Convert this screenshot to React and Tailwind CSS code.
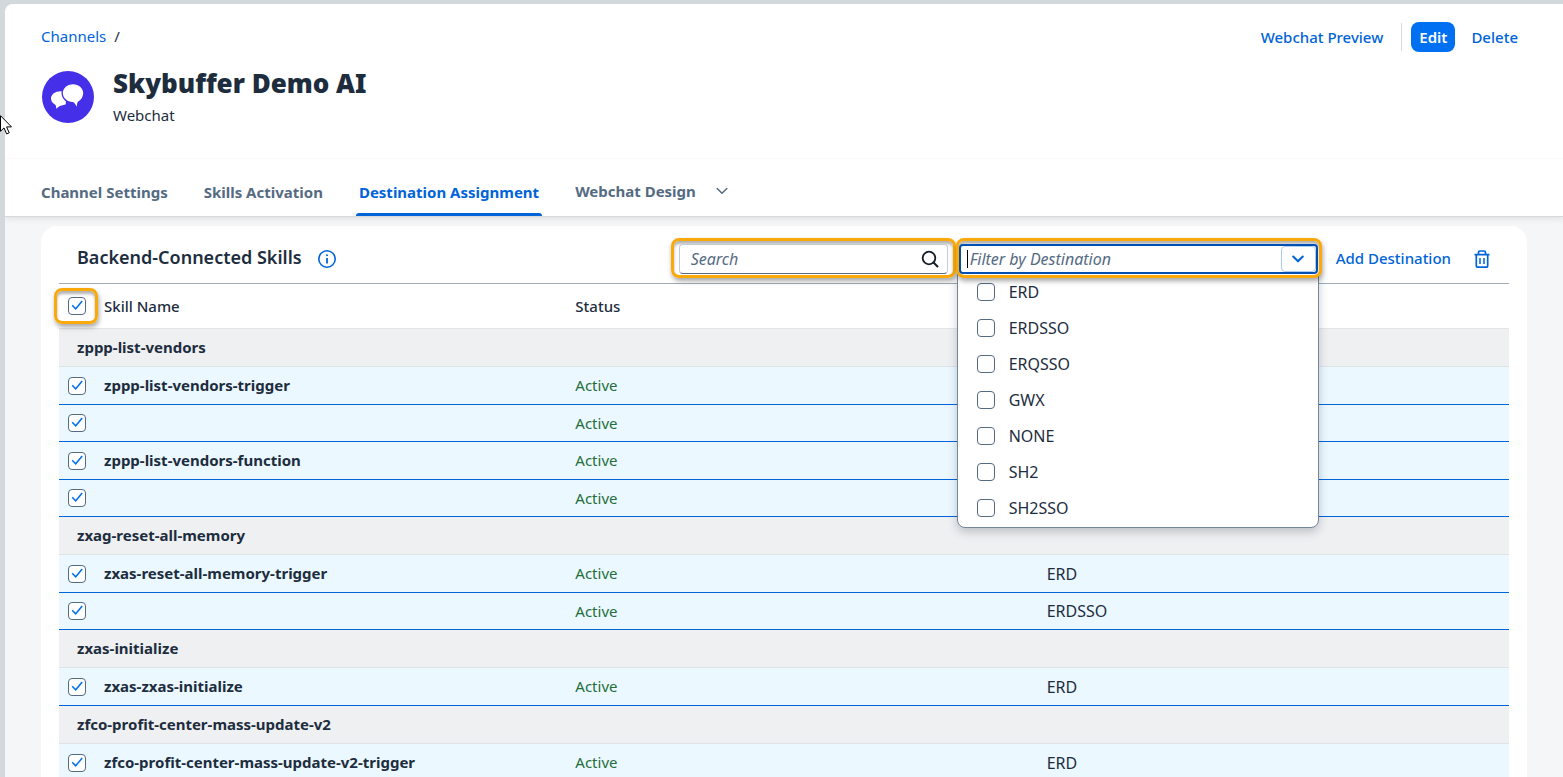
import { useState } from "react";

const rows = [
  { group: "zppp-list-vendors" },
  { name: "zppp-list-vendors-trigger", status: "Active", destination: "" },
  { name: "", status: "Active", destination: "" },
  { name: "zppp-list-vendors-function", status: "Active", destination: "" },
  { name: "", status: "Active", destination: "" },
  { group: "zxag-reset-all-memory" },
  { name: "zxas-reset-all-memory-trigger", status: "Active", destination: "ERD" },
  { name: "", status: "Active", destination: "ERDSSO" },
  { group: "zxas-initialize" },
  { name: "zxas-zxas-initialize", status: "Active", destination: "ERD" },
  { group: "zfco-profit-center-mass-update-v2" },
  { name: "zfco-profit-center-mass-update-v2-trigger", status: "Active", destination: "ERD" },
];

const destinations = ["ERD", "ERDSSO", "ERQSSO", "GWX", "NONE", "SH2", "SH2SSO"];

function Checkbox({ label, defaultChecked }) {
  return (
    <span className="grid h-[18px] w-[18px] shrink-0 place-items-center">
      <input
        type="checkbox"
        aria-label={label}
        defaultChecked={defaultChecked}
        className="peer col-start-1 row-start-1 h-[18px] w-[18px] appearance-none rounded border border-[#556b82] bg-white"
      />
      <svg
        className="pointer-events-none invisible col-start-1 row-start-1 h-[18px] w-[18px] peer-checked:visible"
        viewBox="0 0 18 18"
        fill="none"
        stroke="#0070f2"
        strokeWidth="1.5"
      >
        <path d="M4.2 8.2l3.500 3.600 6.500-7.900" />
      </svg>
    </span>
  );
}

function ChevronDown({ className }) {
  return (
    <svg
      className={className}
      viewBox="0 0 12 8"
      fill="none"
      stroke="currentColor"
      strokeLinecap="round"
      strokeLinejoin="round"
    >
      <path d="M1.2 1.5L6 6.3l4.8-4.8" />
    </svg>
  );
}

function ChatAvatar() {
  return (
    <svg className="h-[52px] w-[52px]" viewBox="0 0 52 52">
      <circle cx="26" cy="26" r="26" fill="#462fe9" />
      {/* Back bubble */}
      <path
        d="M18.500 20.200c-5.300 0-9.500 3.200-9.500 7.200 0 2.500 1.500 4.700 3.900 6 1 .6 1.300 1.800 1.300 4.300 1.800-1.300 3-3.100 5.300-3.300 1.600-.1 3.100-.500 4.300-1.200V20.700c-1.600-.4-3.300-.5-5.300-.5z"
        fill="#fff"
      />
      {/* Front bubble, the outline keeps it apart from the back one */}
      <path
        d="M31 13.200c-5.700 0-10.200 4-10.200 8.900s4.500 9 10 9c1.400 0 2.600 2.300 4 4.700.2-3 .4-4.400 1.400-5.200 3-1.700 5-4.900 5-8.500 0-4.900-4.500-8.900-10.200-8.900z"
        fill="#fff"
        stroke="#462fe9"
        strokeWidth="2.600"
        style={{ paintOrder: "stroke" }}
      />
    </svg>
  );
}

function Header() {
  return (
    <header className="relative z-10 border-b border-[#d9d9d9] bg-white shadow-[0_2px_6px_rgba(34,53,72,0.1)]">
      <div className="flex items-start justify-between border-b border-[#fafafa] pr-[37px] pl-9">
        <div className="h-[154px] pt-5">
          <nav aria-label="Breadcrumb" className="flex gap-2 text-[15px] leading-6">
            <a href="#channels" className="text-[#0064d9]">
              Channels
            </a>
            <span>/</span>
          </nav>
          <div className="mt-4 ml-px flex items-start gap-[19px]">
            <div className="mt-[7px]">
              <ChatAvatar />
            </div>
            <div>
              <h1 className="text-[26px] leading-[38px] font-black">Skybuffer Demo AI</h1>
              <p className="mt-px text-[15px] leading-6">Webchat</p>
            </div>
          </div>
        </div>

        <div className="flex items-center pt-[18px] text-[15px] font-medium text-[#0064d9]">
          <button type="button" className="px-2 leading-7">
            Webchat Preview
          </button>
          <span className="mr-[9px] ml-[10px] h-7 w-px bg-[#d9d9d9]" />
          <button type="button" className="h-[30px] rounded-lg bg-[#0070f2] px-2 font-semibold text-white">
            Edit
          </button>
          <button type="button" className="ml-2 px-2 leading-7">
            Delete
          </button>
        </div>
      </div>

      <div role="tablist" className="flex h-[57px] items-end gap-[30px] pl-[33px] text-[15px] font-bold text-[#556b82]">
        <button type="button" role="tab" className="h-[46px] px-[3px] pb-[2px]">
          Channel Settings
        </button>
        <button type="button" role="tab" className="h-[46px] px-[3px] pb-[2px]">
          Skills Activation
        </button>
        <button
          type="button"
          role="tab"
          aria-selected="true"
          className="relative h-[46px] px-[3px] pb-[2px] text-[#0064d9] after:absolute after:inset-x-0 after:bottom-0 after:h-[3px] after:rounded-t after:bg-[#0064d9]"
        >
          Destination Assignment
        </button>
        <button type="button" role="tab" className="flex h-[46px] items-center gap-5 px-[3px] pb-1">
          Webchat Design
          <ChevronDown className="h-2 w-3 stroke-[1.5]" />
        </button>
      </div>
    </header>
  );
}

function DestinationFilter() {
  const [open, setOpen] = useState(true);

  return (
    <div className="relative w-[366px] shrink-0">
      <div className="relative z-20 rounded-lg border-[3px] border-[#faa90a] bg-white pt-[3px] pb-px pr-px shadow-[1px_3px_5px_rgba(0,0,0,0.35),inset_0_3px_3px_rgba(0,0,0,0.3)]">
        <div className="flex h-[30px] rounded border-2 border-[#0050b4] bg-white">
          <span className="my-1 ml-[6px] w-px bg-black" />
          <input
            type="text"
            aria-label="Filter by Destination"
            placeholder="Filter by Destination"
            className="min-w-0 flex-1 pl-[2px] text-base outline-none placeholder:text-[#556b82] placeholder:italic"
          />
          <button
            type="button"
            aria-label="Show destinations"
            aria-expanded={open}
            onClick={() => setOpen(!open)}
            className="flex w-[35px] items-center justify-center rounded border border-[#a9cdf5] text-[#0064d9]"
          >
            <ChevronDown className="h-2 w-3 stroke-2" />
          </button>
        </div>
      </div>

      {open && (
        <ul className="absolute top-[35px] right-[3px] left-px z-10 rounded-b-lg border border-[#75869a] bg-white pb-px shadow-[0_4px_10px_rgba(34,53,72,0.25)]">
          {destinations.map((item) => (
            <li key={item}>
              <label className="flex h-9 items-center gap-[14px] pl-[19px] text-base">
                <Checkbox />
                {item}
              </label>
            </li>
          ))}
        </ul>
      )}
    </div>
  );
}

function Toolbar() {
  return (
    <div className="flex h-[58px] items-start border-b border-[#a0acb9] pt-3 pr-[19px] pl-[18px]">
      <div className="flex h-[38px] items-center gap-4">
        <h2 className="text-[18px] font-semibold">Backend-Connected Skills</h2>
        <button type="button" aria-label="Information" className="mt-1 text-[#0064d9]">
          <svg className="h-[18px] w-[18px]" viewBox="0 0 18 18" fill="none" stroke="currentColor">
            <circle cx="9" cy="9" r="8.200" strokeWidth="1.600" />
            <path d="M9 8v5.500" strokeWidth="1.800" />
            <circle cx="9" cy="5.300" r="1" fill="currentColor" stroke="none" />
          </svg>
        </button>
      </div>

      <div className="ml-auto flex items-start">
        <div className="w-[285px] rounded-lg border-[3px] border-[#faa90a] px-[5px] pt-[3px] pb-px shadow-[1px_3px_5px_rgba(0,0,0,0.35),inset_0_3px_3px_rgba(0,0,0,0.3)]">
          <div className="flex h-[30px] items-center rounded border border-b-[#556b82] border-[#c5ccd3] bg-white pr-2 pl-[11px]">
            <input
              type="search"
              aria-label="Search"
              placeholder="Search"
              className="min-w-0 flex-1 text-base outline-none placeholder:text-[#556b82] placeholder:italic"
            />
            <button type="button" aria-label="Run search" className="text-[#131e29]">
              <svg className="h-[18px] w-[18px]" viewBox="0 0 18 18" fill="none" stroke="currentColor">
                <circle cx="8" cy="8" r="6.300" strokeWidth="1.800" />
                <path d="M12.500 12.500l4 4" strokeWidth="2" strokeLinecap="round" />
              </svg>
            </button>
          </div>
        </div>
        <DestinationFilter />
        <button type="button" className="ml-[14px] h-10 text-[15px] font-medium text-[#0064d9]">
          Add Destination
        </button>
        <button
          type="button"
          aria-label="Delete destination"
          className="ml-[23px] flex h-[42px] items-center text-[#0064d9]"
        >
          <svg className="h-[18px] w-4" viewBox="0 0 16 18" fill="none" stroke="currentColor" strokeWidth="1.700">
            <path d="M.5 4.700h15M4.500 4.500V2.600C4.500 1.600 5 1 6 1h4c1 0 1.500.6 1.500 1.600v1.900" />
            <path d="M2.300 5v10.400c0 1.100.6 1.700 1.700 1.700h8c1.100 0 1.700-.6 1.700-1.700V5" />
            <path d="M6 8v6M10 8v6" strokeWidth="1.500" />
          </svg>
        </button>
      </div>
    </div>
  );
}

function SkillsTable() {
  return (
    <table className="w-full table-fixed border-separate border-spacing-0 text-left text-[15px]">
      <colgroup>
        <col className="w-9" />
        <col />
        <col />
        <col />
      </colgroup>
      <thead>
        <tr>
          <th className="h-[45px] border-b border-[#e5e5e5]">
            <div className="relative flex justify-center before:absolute before:-inset-y-[9px] before:-right-[3px] before:-left-[5px] before:rounded-lg before:border-[3px] before:border-[#faa90a] before:shadow-[1px_3px_5px_rgba(0,0,0,0.35),inset_0_3px_3px_rgba(0,0,0,0.3)]">
              <Checkbox label="Select all skills" defaultChecked />
            </div>
          </th>
          <th className="border-b border-[#e5e5e5] pl-[9px] font-medium">Skill Name</th>
          <th className="border-b border-[#e5e5e5] pl-[9px] font-medium">Status</th>
          <th className="border-b border-[#e5e5e5]" />
        </tr>
      </thead>
      <tbody>
        {rows.map((row, i) =>
          row.group ? (
            <tr key={i} className="bg-[#eff0f2]">
              <th colSpan={4} scope="rowgroup" className="h-[38px] border-b border-[#e0e3e6] pl-[18px] font-bold">
                {row.group}
              </th>
            </tr>
          ) : (
            <tr key={i} className={`bg-[#ebf8ff] ${row.name ? "h-[38px]" : "h-[37px]"}`}>
              <td className="border-b border-[#0064d9] pl-[9px]">
                <Checkbox label={row.name || "Skill"} defaultChecked />
              </td>
              <td className="border-b border-[#0064d9] pl-[9px] font-bold">{row.name}</td>
              <td className="border-b border-[#0064d9] pl-[9px] text-[#256f3a]">{row.status}</td>
              <td className="border-b border-[#0064d9] pl-[9px] text-base">{row.destination}</td>
            </tr>
          )
        )}
      </tbody>
    </table>
  );
}

export default function App() {
  return (
    <div className="relative h-screen overflow-hidden bg-[#d3d8dd] pt-1 pl-[5px] font-['Noto_Sans',sans-serif] text-[#1d2d3e]">
      <div className="flex h-full flex-col overflow-hidden rounded-tl-lg bg-[#f5f6f7]">
        <Header />
        <main className="mx-9 mt-[9px] rounded-t-2xl bg-white px-[18px]">
          <Toolbar />
          <SkillsTable />
        </main>
      </div>

      {/* Mouse pointer */}
      <svg className="absolute top-[115px] left-0 z-20 h-5 w-3" viewBox="0 0 12 20" fill="#fff" stroke="#000">
        <path d="M.5.700v15.600l3.500-3.400 2.600 6 2.600-1.100-2.600-5.900h4.900z" />
      </svg>
    </div>
  );
}
